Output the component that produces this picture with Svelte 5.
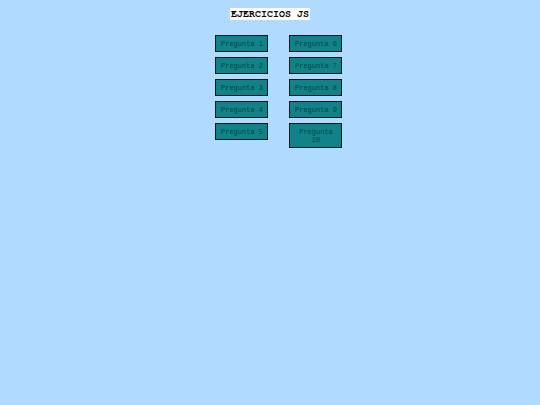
<script>
    const columns = [
        [1, 2, 3, 4, 5],
        [6, 7, 8, 9, 10]
    ];

    let selected = null;

    function handleChoice(number) {
        selected = number;
    }
</script>

<main>
    <h1><span>EJERCICIOS JS</span></h1>

    <div class="questions">
        {#each columns as column}
            <ul>
                {#each column as number}
                    <li>
                        <button type="button" class:selected={selected === number} on:click={() => handleChoice(number)}>
                            Pregunta {number}
                        </button>
                    </li>
                {/each}
            </ul>
        {/each}
    </div>
</main>

<style>
    :global(body) {
        margin: 0;
        background-color: #b0daff;
    }

    main {
        padding: 8px;
        font-family: FreeMono, "Nimbus Mono PS", "Liberation Mono", "Courier New", monospace;
    }

    h1 {
        margin: 0 0 15px;
        text-align: center;
        font-size: 10px;
        line-height: 10px;
    }

    h1 span {
        display: inline-block;
        padding: 1px;
        color: #000;
        background-color: #fff;
    }

    .questions {
        display: flex;
        justify-content: center;
        align-items: flex-start;
        gap: 21px;
        padding-left: 16px;
    }

    ul {
        display: flex;
        flex-direction: column;
        gap: 5px;
        width: 53px;
        margin: 0;
        padding: 0;
        list-style: none;
    }

    li {
        display: flex;
    }

    button {
        width: 100%;
        padding: 4px 3px 3px 5px;
        border: 1px solid #00131a;
        border-radius: 0;
        font-family: "Liberation Mono", "Courier New", monospace;
        font-size: 7px;
        line-height: 8px;
        text-align: center;
        color: #07464a;
        background-color: #108288;
        cursor: pointer;
    }

    button:hover,
    .selected {
        background-color: #0c6f74;
    }
</style>
